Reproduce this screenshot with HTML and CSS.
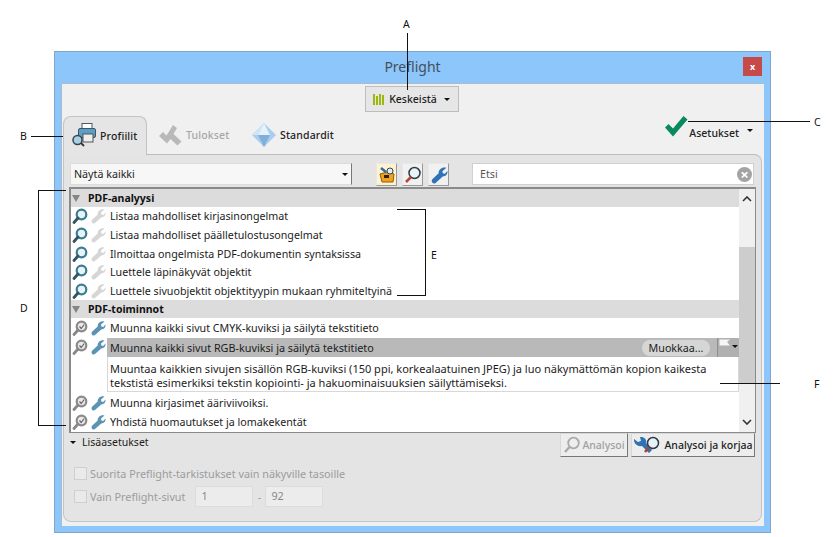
FILE: index.html
```html
<!DOCTYPE html>
<html lang="fi">
<head>
<meta charset="utf-8">
<title>Preflight</title>
<link rel="stylesheet" href="styles.css">
</head>
<body>
<svg class="defs" width="0" height="0">
  <symbol id="mag" viewBox="0 0 16 16"><circle cx="9.500" cy="6.500" r="4.800" fill="#e6f3f8" stroke="#3e7c92" stroke-width="2.200"/><path d="M6 10 L2 14.500" stroke="#2f5566" stroke-width="2.800" stroke-linecap="round"/></symbol>
  <symbol id="magoff" viewBox="0 0 16 16"><circle cx="9.500" cy="6.500" r="4.800" fill="#e8e8e8" stroke="#8a8a8a" stroke-width="2.200"/><path d="M6 10 L2 14.500" stroke="#888" stroke-width="2.800" stroke-linecap="round"/><path d="M7.500 6.500l1.700 2 3-4" fill="none" stroke="#666" stroke-width="1.200"/></symbol>
  <symbol id="wrench" viewBox="0 0 16 16"><path d="M14.500 1.500 11 4.600l.4 1.800 1.800.5 2.300-2.400c.4 2.600-1.400 5-4.200 4.900L5 15c-1.400 1.100-3.300.1-3.500-1.600 0-.8.300-1.300.8-1.800l5.400-5.200C7.400 3.400 10.600.3 14.500 1.500z"/></symbol>
</svg>
<div class="stage">
  <section class="window">
    <header class="titlebar">
      <h1 class="title">Preflight</h1>
      <button class="close">x</button>
    </header>
    <div class="client">
      <div class="topbar">
        <button class="keskeista">
          <svg class="bars" viewBox="0 0 12 12" width="12" height="12"><path d="M1 1v11M4 3v9M7 1v11M10 2v10" stroke="#9ab80e" stroke-width="2"/></svg>
          <span>Keskeistä</span><i class="caret"></i>
        </button>
      </div>
      <div class="tabs">
        <div class="tab active">
          <svg class="tabicon" viewBox="0 0 28 28" width="28" height="28">
            <rect x="12" y="1.500" width="10" height="6" fill="#fff" stroke="#4a5a68"/>
            <rect x="8.500" y="6.500" width="17" height="9" rx="1.500" fill="#5d9ec5" stroke="#3c5568"/>
            <rect x="13" y="12" width="10" height="8" fill="#eee" stroke="#555"/>
            <circle cx="7.500" cy="18" r="4.500" fill="#a8d0e2" stroke="#34454f" stroke-width="1.500"/>
            <path d="M11 21l3 3" stroke="#333" stroke-width="1.800"/>
          </svg>
          <span>Profiilit</span>
        </div>
        <div class="tab disabled">
          <svg viewBox="0 0 26 26" width="26" height="26"><path d="M1 14l4-4 3.500 3.500L15 3l4 3-3.500 6 8 7.500-4 4-7-6.500-3.500 4.500z" fill="#b9b9b9"/></svg>
          <span>Tulokset</span>
        </div>
        <div class="tab third">
          <svg viewBox="0 0 26 26" width="26" height="26"><path d="M13 1 25 13 13 25 1 13z" fill="#a9cdea"/><path d="M13 1 19 13H7z" fill="#e6f2fb"/><path d="M7 13h12l-6 12z" fill="#7fb0da"/><path d="M1 13 13 1 7 13z" fill="#cfe5f6"/></svg>
          <span>Standardit</span>
        </div>
        <div class="settings">
          <svg class="check" viewBox="0 0 24 22" width="24" height="22"><path d="M1 12.500 4.500 9l4.500 4.500L19.500 1 23.500 4.500 9 21.500z" fill="#0a8a5c"/></svg>
          <span>Asetukset</span><i class="caret wide"></i>
        </div>
      </div>
      <div class="panel">
        <div class="filters">
          <div class="select"><span>Näytä kaikki</span><i class="caret"></i></div>
          <div class="tools">
            <button class="tool on"><svg viewBox="0 0 18 18" width="18" height="18"><path d="M2 8l7-2 7 2-1 8H4z" fill="#eda31f" stroke="#8d5b10"/><rect x="6" y="9" width="5" height="3" fill="#30240f"/><circle cx="12" cy="5" r="3" fill="#dfeef5" stroke="#345"/><path d="M3 2l5 4" stroke="#2f6ea5" stroke-width="2.500"/></svg></button>
            <button class="tool"><svg viewBox="0 0 18 18" width="18" height="18"><circle cx="10.500" cy="7" r="5.500" fill="#e8f3f8" stroke="#2d3a44" stroke-width="1.500"/><path d="M7 11l-5 5" stroke="#b8452f" stroke-width="2.500"/></svg></button>
            <button class="tool"><svg class="blue" width="18" height="18"><use href="#wrench"/></svg></button>
          </div>
          <div class="search"><span>Etsi</span><i class="clear">×</i></div>
        </div>
        <div class="list">
          <div class="rows">
            <div class="group"><i class="tri"></i>PDF-analyysi</div>
            <div class="row"><svg class="ic"><use href="#mag"/></svg><svg class="ic pale"><use href="#wrench"/></svg><span>Listaa mahdolliset kirjasinongelmat</span></div>
            <div class="row"><svg class="ic"><use href="#mag"/></svg><svg class="ic pale"><use href="#wrench"/></svg><span>Listaa mahdolliset päälletulostusongelmat</span></div>
            <div class="row"><svg class="ic"><use href="#mag"/></svg><svg class="ic pale"><use href="#wrench"/></svg><span>Ilmoittaa ongelmista PDF-dokumentin syntaksissa</span></div>
            <div class="row"><svg class="ic"><use href="#mag"/></svg><svg class="ic pale"><use href="#wrench"/></svg><span>Luettele läpinäkyvät objektit</span></div>
            <div class="row"><svg class="ic"><use href="#mag"/></svg><svg class="ic pale"><use href="#wrench"/></svg><span>Luettele sivuobjektit objektityypin mukaan ryhmiteltyinä</span></div>
            <div class="group"><i class="tri"></i>PDF-toiminnot</div>
            <div class="row"><svg class="ic"><use href="#magoff"/></svg><svg class="ic steel"><use href="#wrench"/></svg><span>Muunna kaikki sivut CMYK-kuviksi ja säilytä tekstitieto</span></div>
            <div class="row sel">
              <svg class="ic"><use href="#magoff"/></svg><svg class="ic steel"><use href="#wrench"/></svg>
              <div class="detail">
                <div class="selhead">
                  <span class="seltext">Muunna kaikki sivut RGB-kuviksi ja säilytä tekstitieto</span>
                  <span class="edit">Muokkaa...</span>
                  <span class="flag"><svg viewBox="0 0 12 8" width="12" height="8"><path d="M.5 .5h10.500l-3 2.500 3 3.500H.5z" fill="#f6f6f6"/></svg><i class="caret"></i></span>
                </div>
                <p class="desc">Muuntaa kaikkien sivujen sisällön RGB-kuviksi (150 ppi, korkealaatuinen JPEG) ja luo näkymättömän kopion kaikesta tekstistä esimerkiksi tekstin kopiointi- ja hakuominaisuuksien säilyttämiseksi.</p>
              </div>
            </div>
            <div class="row"><svg class="ic"><use href="#magoff"/></svg><svg class="ic steel"><use href="#wrench"/></svg><span>Muunna kirjasimet ääriviivoiksi.</span></div>
            <div class="row"><svg class="ic"><use href="#magoff"/></svg><svg class="ic steel"><use href="#wrench"/></svg><span>Yhdistä huomautukset ja lomakekentät</span></div>
          </div>
          <div class="scrollbar">
            <svg viewBox="0 0 10 6" width="10" height="6"><path d="M1 5l4-4 4 4" fill="none" stroke="#333" stroke-width="1.600"/></svg>
            <div class="thumb"></div>
            <svg viewBox="0 0 10 6" width="10" height="6"><path d="M1 1l4 4 4-4" fill="none" stroke="#333" stroke-width="1.600"/></svg>
          </div>
        </div>
        <div class="actions">
          <div class="more"><i class="caret"></i>Lisäasetukset</div>
          <button class="act off"><svg viewBox="0 0 18 18" width="18" height="18"><circle cx="10.500" cy="7" r="5.300" fill="#eee" stroke="#aaa" stroke-width="1.800"/><path d="M6.500 11l-4.500 5" stroke="#aaa" stroke-width="2.500"/></svg><span>Analysoi</span></button>
          <button class="act"><svg viewBox="0 0 30 18" width="30" height="18"><path class="wr" d="M1 3l4 3 3-1-1-4c4-.5 7 2 6 6l6 7-3 3-7-7C4 11 .5 7 1 3z" fill="#2f73b5"/><circle cx="20" cy="7" r="5.500" fill="#e8f3f8" stroke="#2d3a44" stroke-width="1.500"/><path d="M16 11l-4 5" stroke="#a8452f" stroke-width="2.500"/></svg><span>Analysoi ja korjaa</span></button>
        </div>
        <div class="options">
          <label class="opt"><i class="box"></i>Suorita Preflight-tarkistukset vain näkyville tasoille</label>
          <label class="opt"><i class="box"></i>Vain Preflight-sivut<span class="num first">1</span><span class="dash">-</span><span class="num">92</span></label>
        </div>
      </div>
    </div>
  </section>

  <span class="note na">A</span><i class="ln la"></i>
  <span class="note nb">B</span><i class="ln lb"></i>
  <span class="note nc">C</span><i class="ln lc"></i>
  <span class="note nd">D</span><i class="brk bd"></i>
  <span class="note ne">E</span><i class="brk be"></i>
  <span class="note nf">F</span><i class="ln lf"></i>
</div>
</body>
</html>
```
FILE: styles.css
```css
* { box-sizing: border-box; }
html, body { margin: 0; background: #fff; }
body { font-family: "Noto Sans", "Open Sans", sans-serif; font-size: 10.700px; color: #1c1c1c; }
i { font-style: normal; }
button { font: inherit; color: inherit; padding: 0; }
.defs { position: absolute; }
.stage { position: relative; width: 834px; height: 537px; overflow: hidden; padding: 51px 0 0 54px; }

.window { width: 717px; height: 482px; background: #8cc6fb; border: 1px solid #7fa8cc; padding: 0 6px 6px; display: flex; flex-direction: column; }
.titlebar { height: 31px; flex: none; display: flex; align-items: center; position: relative; }
.title { flex: 1; margin: 0; text-align: center; font-weight: 400; font-size: 14px; color: #44505c; padding-bottom: 2px; }
.close { position: absolute; right: 2px; top: 5px; width: 19px; height: 19px; background: #c74a4a; border: 0; color: #fff; font-size: 9px; font-weight: 700; line-height: 17px; }
.client { flex: 1; background: #f0f0f0; border: 1px solid #a9bccb; border-width: 1px 0 0 1px; display: flex; flex-direction: column; min-height: 0; }

.topbar { height: 31px; flex: none; display: flex; justify-content: center; padding-top: 2px; }
.keskeista { width: 94px; height: 26px; background: #e6e6e6; border: 1px solid #bdbdbd; display: flex; align-items: center; justify-content: center; gap: 4px; font-size: 10.500px; font-weight: 500; margin-left: -3px; }
.caret { display: inline-block; width: 0; height: 0; border: 3px solid transparent; border-top: 3.500px solid #111; border-bottom: 0; }
.keskeista .caret { margin-left: 3px; }

.tabs { height: 39px; flex: none; display: flex; align-items: flex-end; padding-left: 1px; position: relative; }
.tab { height: 38px; display: flex; align-items: center; gap: 2px; font-size: 10.500px; }
.tab span { font-weight: 500; letter-spacing: .15px; color: #222; }
.tab.active { width: 84px; background: #e5e5e5; border: 1px solid #c4c4c4; border-bottom: 0; border-radius: 8px 8px 0 0; margin-bottom: -1px; height: 39px; position: relative; z-index: 1; padding-left: 6px; }
.tab.disabled { width: 99px; padding-left: 11px; }
.tab.disabled span { color: #a6a6a6; }
.tab.third { padding-left: 5px; gap: 3px; }
.settings { position: absolute; right: 11px; bottom: 11px; display: flex; align-items: center; font-size: 10.500px; font-weight: 500; color: #222; }
.settings span { margin-left: 1px; padding-top: 8px; }
.check { margin-bottom: 6px; }
.caret.wide { margin-left: 8px; margin-top: 2px; }

.panel { flex: 1; margin: 0 2px 4px 1px; background: #e4e4e4; border: 1px solid #c4c4c4; border-top-color: #bcbcbc; border-radius: 0 8px 8px 8px; padding: 6px 6px 0 6px; display: flex; flex-direction: column; min-height: 0; }
.filters { height: 26px; flex: none; display: flex; align-items: flex-start; }
.select { width: 282px; height: 22px; margin-top: 2px; background: #f7f7f7; border: 1px solid #ddd; border-right-color: #777; display: flex; align-items: center; justify-content: space-between; padding: 0 3px; }
.tools { display: flex; gap: 5px; margin-left: 24px; margin-top: 2px; }
.tool { width: 21px; height: 23px; background: #f1f1f1; border: 1px solid #e8e8e8; border-right-color: #999; border-bottom-color: #999; display: flex; align-items: center; justify-content: center; }
.tool.on { background: #fff2cf; }
.blue { fill: #2f73b5; }
.search { width: 282px; height: 22px; margin-left: 23px; margin-top: 2px; background: #fff; border: 1px solid #d0d0d0; display: flex; align-items: center; justify-content: space-between; padding: 0 1px 0 7px; color: #555; }
.clear { width: 15px; height: 15px; border-radius: 50%; background: #a3a3a3; color: #fff; font-size: 15px; font-weight: 700; line-height: 14px; text-align: center; }

.list { height: 246px; flex: none; margin-left: -1px; width: 687px; background: #fff; border: 2px solid #8a8a8a; border-width: 2px 1px 1px 2px; display: flex; }
.rows { flex: 1; min-width: 0; padding-left: 0; }
.group { height: 18px; background: #dcdcdc; display: flex; align-items: center; gap: 8px; padding-left: 1px; font-weight: 700; font-size: 10.500px; color: #111; }
.tri { width: 0; height: 0; border: 4px solid transparent; border-top: 7px solid #858585; border-bottom: 0; margin-top: 1px; }
.row { height: 18.700px; display: flex; align-items: center; padding-left: 1px; gap: 2px; }
.row > span { margin-left: 2px; }
.ic { width: 16px; height: 16px; flex: none; }
.pale { fill: #d6d6d6; }
.steel { fill: #5b93b4; }
.row.sel { height: 57px; align-items: flex-start; padding-top: 1px; }
.row.sel .ic { margin-top: 1px; }
.detail { flex: 1; margin-left: -1px; min-width: 0; }
.selhead { height: 19px; background: #b9b9b9; display: flex; align-items: center; padding-left: 3px; }
.seltext { flex: 1; font-size: 10.800px; }
.edit { width: 68px; height: 16px; border-radius: 8px; background: #d6d6d6; text-align: center; line-height: 16px; margin-right: 7px; }
.flag { width: 22px; height: 19px; background: #b0b0b0; border-left: 1px solid #8e8e8e; display: flex; align-items: flex-start; padding-left: 1px; padding-top: 1px; }
.flag .caret { margin-top: 6px; margin-left: 1px; }
.desc { margin: 0; height: 35px; padding: 5px 30px 0 2px; border: 1px solid #d8d8d8; border-top: 0; line-height: 14px; font-size: 11px; width: 100%; }
.scrollbar { width: 16px; flex: none; background: #f0f0f0; display: flex; flex-direction: column; align-items: center; padding-top: 7px; }
.thumb { width: 100%; height: 136px; background: #cdcdcd; margin: 45px 0 36px; }

.actions { height: 27px; flex: none; display: flex; align-items: flex-start; position: relative; }
.more { flex: 1; display: flex; align-items: center; gap: 6px; padding-top: 2px; font-size: 10.500px; }
.more .caret { border-left-width: 3.500px; border-right-width: 3.500px; }
.act { height: 24px; background: #ededed; border: 1px solid #d8d8d8; border-right-color: #777; border-bottom-color: #777; display: flex; align-items: center; justify-content: center; gap: 1px; font-size: 10.500px; font-weight: 500; color: #222; margin-left: 3px; width: 124px; }
.act.off { width: 68px; color: #a0a0a0; }
.options { padding-left: 4px; padding-top: 2px; color: #9c9c9c; font-size: 10.800px; }
.opt { display: flex; align-items: center; height: 23px; }
.box { width: 13px; height: 13px; background: #eaeaea; border: 1px solid #cfcfcf; margin-right: 3px; }
.num { width: 58px; height: 21px; background: #ececec; border: 1px solid #dcdcdc; line-height: 17px; padding-left: 5px; color: #888; }
.num.first { margin-left: 10px; }
.dash { width: 12px; text-align: center; }

.note { position: absolute; font-size: 10.500px; color: #111; line-height: 12px; }
.na { left: 403px; top: 18px; }
.nb { left: 20px; top: 130px; }
.nc { left: 814px; top: 116px; }
.nd { left: 20px; top: 302px; }
.ne { left: 431px; top: 249px; }
.nf { left: 814px; top: 378px; }
.ln { position: absolute; background: #111; }
.la { left: 407px; top: 33px; width: 1px; height: 57px; }
.lb { left: 31px; top: 136px; width: 39px; height: 1px; }
.lc { left: 688px; top: 121px; width: 122px; height: 1px; }
.lf { left: 720px; top: 383px; width: 60px; height: 1px; }
.brk { position: absolute; border: 1px solid #111; }
.bd { left: 38px; top: 190px; width: 28px; height: 236px; border-right: 0; }
.be { left: 397px; top: 209px; width: 29px; height: 87px; border-left: 0; }
```
